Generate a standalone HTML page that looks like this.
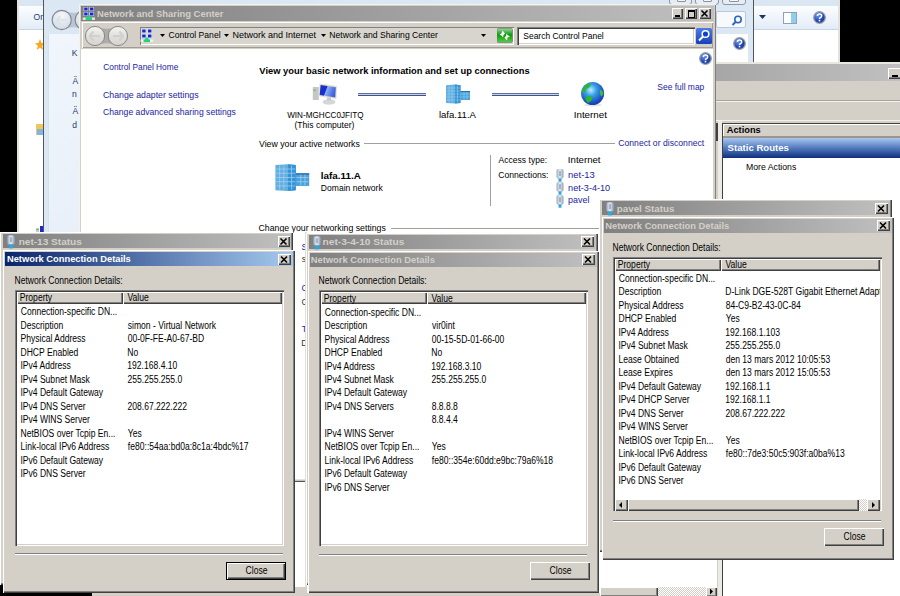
<!DOCTYPE html><html><head><meta charset="utf-8"><style>
html,body{margin:0;padding:0;}
body{width:900px;height:596px;position:relative;overflow:hidden;background:#000;font-family:"Liberation Sans",sans-serif;}
.r{position:absolute;}
.t{position:absolute;white-space:nowrap;transform-origin:0 50%;}
svg{display:block}
</style></head><body>
<div class="r" style="left:17px;top:0px;width:822px;height:593px;background:#fff;"></div>
<div class="r" style="left:17px;top:0px;width:2px;height:593px;background:#e4e1da;"></div>
<div class="r" style="left:838px;top:0px;width:2px;height:62px;background:#e4e1da;"></div>
<div class="r" style="left:19px;top:0px;width:819px;height:6px;background:#dbe6f3;"></div>
<div class="r" style="left:19px;top:6px;width:819px;height:23px;background:linear-gradient(#fcfdff,#e3ecf7);"></div>
<div class="r" style="left:19px;top:29px;width:819px;height:1px;background:#c6d4e6;"></div>
<div class="t" style="left:33px;top:12px;font-size:9.5px;line-height:9.5px;color:#1e3a78;transform:translate(0.615px,0.454px) scaleX(0.9000);">Or</div>
<svg class="r" style="left:35px;top:39px" width="10" height="12"><path d="M5 0 L6.5 4 L10 4.3 L7.2 6.8 L8.2 11 L5 8.6 L1.8 11 L2.8 6.8 L0 4.3 L3.5 4z" fill="#f6a91f"/></svg>
<svg class="r" style="left:36px;top:123px" width="8" height="13"><rect x="0" y="1" width="8" height="11" fill="#f0c75a"/><rect x="1" y="6" width="7" height="6" fill="#7fb7e0"/></svg>
<svg class="r" style="left:813px;top:11px" width="13" height="13"><defs><radialGradient id="hg813" cx="0.35" cy="0.3" r="0.8"><stop offset="0" stop-color="#6f9af0"/><stop offset="0.6" stop-color="#1f47b8"/><stop offset="1" stop-color="#183a98"/></radialGradient></defs><circle cx="6.5" cy="6.5" r="5.8" fill="url(#hg813)" stroke="#9c9fa6" stroke-width="1.3"/><path d="M4.4 4.9 Q4.4 2.9 6.5 2.9 Q8.7 2.9 8.7 4.8 Q8.7 6.1 7.3 6.7 Q6.5 7.1 6.5 8.0" stroke="#fff" stroke-width="1.5" fill="none"/><rect x="5.7" y="8.8" width="1.6" height="1.6" fill="#fff"/></svg>
<svg class="r" style="left:759px;top:15px" width="8" height="5"><path d="M0 0 L7 0 L3.5 4z" fill="#1c3460"/></svg>
<svg class="r" style="left:783px;top:12px" width="14" height="12"><rect x="0.5" y="0.5" width="13" height="11" fill="#fff" stroke="#8aa2bf"/><rect x="8" y="1" width="5" height="10" fill="#8fd0e8"/></svg>
<svg class="r" style="left:35px;top:224px" width="8" height="9"><rect x="1" y="4" width="3" height="5" fill="#c8c8c8"/><rect x="1.5" y="5" width="2" height="1" fill="#4c4"/><rect x="5" y="2" width="3" height="7" fill="#1a2ad0"/></svg>
<div class="r" style="left:43px;top:0px;width:711px;height:593px;background:#dce7f4;"></div>
<div class="r" style="left:43px;top:0px;width:1px;height:593px;background:#555;"></div>
<div class="r" style="left:753px;top:0px;width:1px;height:62px;background:#555;"></div>
<div class="r" style="left:49px;top:34px;width:699px;height:559px;background:linear-gradient(160deg,#f1f6fc 0%,#e3ecf7 40%,#d9e5f3 100%);"></div>
<div class="r" style="left:48px;top:34px;width:1px;height:559px;background:#d3e0ef;"></div>
<div class="r" style="left:717px;top:34px;width:31px;height:28px;background:#fff;"></div>
<svg class="r" style="left:50.8px;top:8.5px" width="28" height="23"><defs><radialGradient id="bb" cx="0.5" cy="0.3" r="0.7"><stop offset="0" stop-color="#f6f8fa"/><stop offset="1" stop-color="#d2dae3"/></radialGradient></defs><path d="M11 1.4 Q22.5 6 34 1.4 L34 20.6 Q22.5 16 11 20.6z" fill="#b9c6d4"/><circle cx="10.7" cy="11" r="9.6" fill="url(#bb)" stroke="#7d8692" stroke-width="1.1"/><circle cx="33.7" cy="11" r="9.6" fill="url(#bb)" stroke="#7d8692" stroke-width="1.1"/><path d="M5.5 11 L15.5 11 M5.5 11 L9.5 7 M5.5 11 L9.5 15" stroke="#dde3ea" stroke-width="2" fill="none"/></svg>
<div class="t" style="left:71px;top:47px;font-size:9.5px;line-height:9.5px;color:#1e3a6e;transform:translate(0.816px,0.953px) scaleX(0.9000);">K</div>
<div class="t" style="left:72px;top:75px;font-size:9.5px;line-height:9.5px;color:#1e3a6e;transform:translate(0.500px,0.954px) scaleX(0.9000);">Ä</div>
<div class="t" style="left:71px;top:88px;font-size:9.5px;line-height:9.5px;color:#1e3a6e;transform:translate(0.944px,0.954px) scaleX(0.9000);">n</div>
<div class="t" style="left:72px;top:105px;font-size:9.5px;line-height:9.5px;color:#1e3a6e;transform:translate(0.500px,0.954px) scaleX(0.9000);">Ä</div>
<div class="t" style="left:72px;top:119px;font-size:9.5px;line-height:9.5px;color:#1e3a6e;transform:translate(0.158px,0.954px) scaleX(0.9000);">d</div>
<div class="r" style="left:669px;top:-4px;width:23px;height:8.5px;background:#e6edf5;border:1px solid #8c98a6;box-sizing:border-box;border-radius:0 0 3px 3px;"></div>
<div class="r" style="left:695px;top:-4px;width:24px;height:8.5px;background:#e6edf5;border:1px solid #8c98a6;box-sizing:border-box;border-radius:0 0 3px 3px;"></div>
<div class="r" style="left:722px;top:-4px;width:24px;height:8.5px;background:#e6edf5;border:1px solid #8c98a6;box-sizing:border-box;border-radius:0 0 3px 3px;"></div>
<div class="r" style="left:677px;top:-2px;width:9px;height:3.5px;background:#f4f6f8;border:1px solid #8a929c;box-sizing:border-box;border-radius:1px;"></div>
<div class="r" style="left:703px;top:-2px;width:9px;height:3.5px;background:#f4f6f8;border:1px solid #8a929c;box-sizing:border-box;border-radius:1px;"></div>
<div class="r" style="left:729px;top:-2px;width:10px;height:3.5px;background:#f4f6f8;border:1px solid #8a929c;box-sizing:border-box;border-radius:1px;"></div>
<div class="r" style="left:716px;top:11px;width:30px;height:17px;background:#f7f9fc;border:1px solid #b9c8da;box-sizing:border-box;border-radius:2px;"></div>
<svg class="r" style="left:731px;top:15px" width="12" height="12"><circle cx="7" cy="4.5" r="3.2" fill="none" stroke="#2a66c8" stroke-width="1.6"/><path d="M4.8 6.8 L1.5 10" stroke="#2a66c8" stroke-width="2"/></svg>
<svg class="r" style="left:733px;top:37px" width="13" height="13"><defs><radialGradient id="hg733" cx="0.35" cy="0.3" r="0.8"><stop offset="0" stop-color="#6f9af0"/><stop offset="0.6" stop-color="#1f47b8"/><stop offset="1" stop-color="#183a98"/></radialGradient></defs><circle cx="6.5" cy="6.5" r="5.8" fill="url(#hg733)" stroke="#9c9fa6" stroke-width="1.3"/><path d="M4.4 4.9 Q4.4 2.9 6.5 2.9 Q8.7 2.9 8.7 4.8 Q8.7 6.1 7.3 6.7 Q6.5 7.1 6.5 8.0" stroke="#fff" stroke-width="1.5" fill="none"/><rect x="5.7" y="8.8" width="1.6" height="1.6" fill="#fff"/></svg>
<div class="r" style="left:716px;top:62px;width:184px;height:534px;background:#fff;"></div>
<div class="r" style="left:716px;top:62px;width:184px;height:2px;background:#e9e6df;"></div>
<div class="r" style="left:716px;top:64px;width:184px;height:17px;background:linear-gradient(90deg,#a6a6a6,#c0c0c0);"></div>
<div class="r" style="left:888px;top:68px;width:14px;height:11px;background:#d4d0c8;box-shadow:inset 1px 1px 0 #fff, inset -1px -1px 0 #404040, inset -2px -2px 0 #808080;"></div>
<div class="r" style="left:892px;top:75px;width:6px;height:2px;background:#000"></div>
<div class="r" style="left:716px;top:81px;width:184px;height:40px;background:#d4d0c8;"></div>
<div class="r" style="left:716px;top:100px;width:184px;height:1px;background:#a9a59d;"></div>
<div class="r" style="left:716px;top:101px;width:184px;height:1px;background:#f4f2ee;"></div>
<div class="r" style="left:716px;top:120px;width:184px;height:3px;background:#d4d0c8;"></div>
<div class="r" style="left:716px;top:120px;width:184px;height:1px;background:#f2f0ec;"></div>
<div class="r" style="left:716px;top:123px;width:6px;height:473px;background:#d4d0c8;"></div>
<div class="r" style="left:718px;top:121px;width:4px;height:475px;background:#eceae4;"></div>
<div class="r" style="left:716px;top:123px;width:2px;height:18px;background:#404040;"></div>
<div class="r" style="left:722px;top:123px;width:178px;height:1px;background:#404040;"></div>
<div class="r" style="left:722px;top:124px;width:1px;height:472px;background:#404040;"></div>
<div class="r" style="left:723px;top:124px;width:177px;height:13px;background:#d4d0c8;box-shadow:inset 1px 1px 0 #fff;"></div>
<div class="r" style="left:723px;top:136px;width:177px;height:1.5px;background:#9a968e;"></div>
<div class="t" style="left:726px;top:125px;font-size:9.3px;line-height:9.3px;color:#000;font-weight:bold;transform:translate(0.769px,0.723px) scaleX(0.9946);">Actions</div>
<div class="r" style="left:723px;top:137.5px;width:177px;height:20.5px;background:linear-gradient(#a9c7ee,#5b82c4 45%,#0f2f7e);"></div>
<div class="t" style="left:727px;top:143px;font-size:9.3px;line-height:9.3px;color:#fff;font-weight:bold;transform:translate(0.612px,0.823px) scaleX(1.0310);">Static Routes</div>
<div class="t" style="left:746px;top:162px;font-size:9.3px;line-height:9.3px;color:#000;transform:translate(0.004px,0.523px) scaleX(0.9358);">More Actions</div>
<div class="r" style="left:79px;top:4px;width:637px;height:592px;background:#d4d0c8;box-shadow:inset 1px 1px 0 #f4f2ee, inset -1px 0 0 #808080;"></div>
<div class="r" style="left:81px;top:6px;width:633px;height:15px;background:linear-gradient(90deg,#808080,#c0c0c0);"></div>
<svg class="r" style="left:82px;top:6px" width="14" height="15"><rect x="1.6" y="1" width="4.4" height="4" fill="#e4eaf2"/><rect x="2.2" y="1.5" width="3.4" height="3" fill="#1426d8"/><rect x="7.4" y="1" width="4.4" height="4" fill="#e4eaf2"/><rect x="8" y="1.5" width="3.4" height="3" fill="#1426d8"/><rect x="1.6" y="6" width="4.4" height="4" fill="#e4eaf2"/><rect x="2.2" y="6.5" width="3.4" height="3" fill="#1426d8"/><rect x="7.4" y="6" width="4.4" height="4" fill="#e4eaf2"/><rect x="8" y="6.5" width="3.4" height="3" fill="#1426d8"/><rect x="0.6" y="11.5" width="12.4" height="2.4" fill="#e6e6ec"/><path d="M5.8 9.6 L7.8 9.6 L8.6 11.4 L10 11.4 L10 14 L3.6 14 L3.6 11.4 L5 11.4z" fill="#22d27a"/></svg>
<div class="t" style="left:96px;top:8px;font-size:9.5px;line-height:9.5px;color:#d4d0c8;font-weight:bold;transform:translate(0.888px,0.754px) scaleX(0.9904);">Network and Sharing Center</div>
<div class="r" style="left:672px;top:8px;width:11px;height:11px;background:#d4d0c8;box-shadow:inset 1px 1px 0 #fff, inset -1px -1px 0 #404040, inset -2px -2px 0 #808080;"></div>
<div class="r" style="left:685px;top:8px;width:12px;height:11px;background:#d4d0c8;box-shadow:inset 1px 1px 0 #fff, inset -1px -1px 0 #404040, inset -2px -2px 0 #808080;"></div>
<div class="r" style="left:699px;top:8px;width:12px;height:11px;background:#d4d0c8;box-shadow:inset 1px 1px 0 #fff, inset -1px -1px 0 #404040, inset -2px -2px 0 #808080;"></div>
<div class="r" style="left:675px;top:15px;width:5px;height:2px;background:#000"></div>
<div class="r" style="left:688px;top:10px;width:5px;height:5px;border:1px solid #000;border-top-width:2px"></div>
<div class="r" style="left:699px;top:8px;width:12px;height:11px;background:#d4d0c8;box-shadow:inset 1px 1px 0 #fff, inset -1px -1px 0 #404040, inset -2px -2px 0 #808080;"></div>
<svg class="r" style="left:699px;top:8px" width="12" height="11"><path d="M2.5 2.5 L8.5 8.5 M8.5 2.5 L2.5 8.5" stroke="#000" stroke-width="1.6"/></svg>
<div class="r" style="left:81px;top:21px;width:633px;height:28px;background:#d4d0c8;"></div>
<div class="r" style="left:82px;top:22px;width:631px;height:26px;box-shadow:inset 1px 1px 0 #fff, inset -1px -1px 0 #a09c94;"></div>
<svg class="r" style="left:84px;top:25px" width="46" height="23"><defs><linearGradient id="nb" x1="0" y1="0" x2="0" y2="1"><stop offset="0" stop-color="#f4f4f2"/><stop offset="0.5" stop-color="#e2e0dc"/><stop offset="1" stop-color="#d6d4cf"/></linearGradient></defs><path d="M11 1.6 Q22.5 6 34 1.6 L34 20.4 Q22.5 16 11 20.4z" fill="#aeaca6"/><circle cx="11" cy="11" r="9.6" fill="url(#nb)" stroke="#86888c" stroke-width="1"/><circle cx="33.9" cy="11" r="9.6" fill="url(#nb)" stroke="#86888c" stroke-width="1"/><path d="M5.5 11 L16 11 M5.5 11 L9.5 6.5 M5.5 11 L9.5 15.5" stroke="#d0d0ce" stroke-width="2" fill="none"/><path d="M39.4 11 L29 11 M39.4 11 L35.4 6.5 M39.4 11 L35.4 15.5" stroke="#d0d0ce" stroke-width="2" fill="none"/></svg>
<div class="r" style="left:140px;top:27px;width:374px;height:18px;background:#d8d5ce;box-shadow:inset 1px 1px 0 #808080, inset -1px -1px 0 #fff;"></div>
<svg class="r" style="left:140px;top:28px" width="14" height="15"><rect x="1.6" y="1" width="4.4" height="4" fill="#e4eaf2"/><rect x="2.2" y="1.5" width="3.4" height="3" fill="#1426d8"/><rect x="7.4" y="1" width="4.4" height="4" fill="#e4eaf2"/><rect x="8" y="1.5" width="3.4" height="3" fill="#1426d8"/><rect x="1.6" y="6" width="4.4" height="4" fill="#e4eaf2"/><rect x="2.2" y="6.5" width="3.4" height="3" fill="#1426d8"/><rect x="7.4" y="6" width="4.4" height="4" fill="#e4eaf2"/><rect x="8" y="6.5" width="3.4" height="3" fill="#1426d8"/><rect x="0.6" y="11.5" width="12.4" height="2.4" fill="#f2f2f6"/><path d="M5.8 9.6 L7.8 9.6 L8.6 11.4 L10 11.4 L10 14 L3.6 14 L3.6 11.4 L5 11.4z" fill="#22d27a"/></svg>
<svg class="r" style="left:160px;top:34px" width="6" height="4"><path d="M0 0 L5 0 L2.5 3z" fill="#000"/></svg>
<svg class="r" style="left:224px;top:34px" width="6" height="4"><path d="M0 0 L5 0 L2.5 3z" fill="#000"/></svg>
<svg class="r" style="left:321px;top:34px" width="6" height="4"><path d="M0 0 L5 0 L2.5 3z" fill="#000"/></svg>
<svg class="r" style="left:481px;top:34px" width="6" height="4"><path d="M0 0 L5 0 L2.5 3z" fill="#000"/></svg>
<div class="t" style="left:168px;top:31px;font-size:9.3px;line-height:9.3px;color:#000;transform:translate(0.470px,0.223px) scaleX(0.9250);">Control Panel</div>
<div class="t" style="left:232px;top:31px;font-size:9.3px;line-height:9.3px;color:#000;transform:translate(0.580px,0.223px) scaleX(0.9671);">Network and Internet</div>
<div class="t" style="left:329px;top:31px;font-size:9.3px;line-height:9.3px;color:#000;transform:translate(0.311px,0.223px) scaleX(0.9255);">Network and Sharing Center</div>
<svg class="r" style="left:497px;top:28px" width="16" height="15"><defs><linearGradient id="grb" x1="0" y1="0" x2="0" y2="1"><stop offset="0" stop-color="#9ad89a"/><stop offset="0.45" stop-color="#0c9a0c"/><stop offset="1" stop-color="#5ccc4c"/></linearGradient></defs><rect x="0" y="0.5" width="15.5" height="14" rx="1.5" fill="url(#grb)" stroke="#6a7a6a" stroke-width="0.6"/><path d="M5.5 2.5 L4.5 5.5 L2.5 6.5 L5 8 L6 9.5 L6.5 7 L8 5.5z" fill="#fff"/><path d="M10 12.5 L10.5 9.5 L13 8.5 L10.5 7 L9.5 5.5 L9 8 L7.5 9.5z" fill="#fff"/></svg>
<div class="r" style="left:517px;top:27px;width:178px;height:18px;background:#fff;box-shadow:inset 1px 1px 0 #808080, inset 2px 2px 0 #404040, inset -1px -1px 0 #fff, inset -2px -2px 0 #d4d0c8;"></div>
<div class="t" style="left:523px;top:31px;font-size:9.3px;line-height:9.3px;color:#000;transform:translate(0.319px,0.623px) scaleX(0.9099);">Search Control Panel</div>
<svg class="r" style="left:696px;top:28px" width="16" height="16"><defs><linearGradient id="sg" x1="0" y1="0" x2="0" y2="1"><stop offset="0" stop-color="#4d7ee8"/><stop offset="1" stop-color="#1540b8"/></linearGradient></defs><rect x="0" y="0" width="16" height="16" rx="1.5" fill="url(#sg)"/><circle cx="9.5" cy="6" r="3.3" fill="#1340c8" stroke="#fff" stroke-width="1.5"/><path d="M7 8.5 L3 12.5" stroke="#fff" stroke-width="2"/></svg>
<div class="r" style="left:81px;top:49px;width:632px;height:547px;background:#fff;"></div>
<svg class="r" style="left:699px;top:52px" width="13" height="13"><defs><radialGradient id="hg699" cx="0.35" cy="0.3" r="0.8"><stop offset="0" stop-color="#6f9af0"/><stop offset="0.6" stop-color="#1f47b8"/><stop offset="1" stop-color="#183a98"/></radialGradient></defs><circle cx="6.5" cy="6.5" r="5.8" fill="url(#hg699)" stroke="#9c9fa6" stroke-width="1.3"/><path d="M4.4 4.9 Q4.4 2.9 6.5 2.9 Q8.7 2.9 8.7 4.8 Q8.7 6.1 7.3 6.7 Q6.5 7.1 6.5 8.0" stroke="#fff" stroke-width="1.5" fill="none"/><rect x="5.7" y="8.8" width="1.6" height="1.6" fill="#fff"/></svg>
<div class="t" style="left:103px;top:63px;font-size:9.3px;line-height:9.3px;color:#2323a0;transform:translate(0.283px,0.023px) scaleX(0.8962);">Control Panel Home</div>
<div class="t" style="left:102px;top:91px;font-size:9.3px;line-height:9.3px;color:#2323a0;transform:translate(0.961px,0.123px) scaleX(0.9440);">Change adapter settings</div>
<div class="t" style="left:102px;top:107px;font-size:9.3px;line-height:9.3px;color:#2323a0;transform:translate(0.968px,0.723px) scaleX(0.9282);">Change advanced sharing settings</div>
<div class="t" style="left:259px;top:67px;font-size:9.2px;line-height:9.2px;color:#000;font-weight:bold;transform:translate(0.353px,0.208px) scaleX(1.0187);">View your basic network information and set up connections</div>
<svg class="r" style="left:311px;top:82px" width="28" height="25"><defs><linearGradient id="scr" x1="0" y1="0" x2="1" y2="0.3"><stop offset="0" stop-color="#1c2fd0"/><stop offset="0.45" stop-color="#1530c8"/><stop offset="0.5" stop-color="#8fb0f5"/><stop offset="1" stop-color="#3d62e0"/></linearGradient></defs><rect x="1.8" y="5" width="6" height="13" fill="#c4c6c8"/><rect x="2.5" y="7.5" width="2" height="1.5" fill="#5ac85a"/><path d="M8.5 1.5 L26 4 L25.5 17 L7.5 14.2z" fill="#e6e2cc"/><path d="M9.6 2.9 L24.8 5.2 L24.3 15.6 L8.7 13.1z" fill="url(#scr)"/><ellipse cx="18" cy="20" rx="6.5" ry="2.8" fill="#d4d6d8"/><rect x="16" y="15.5" width="4" height="3" fill="#c8cacc"/></svg>
<div class="r" style="left:358px;top:93px;width:68px;height:1px;background:#5d6f9c;"></div>
<div class="r" style="left:358px;top:94px;width:68px;height:1px;background:#c8d0e3;"></div>
<div class="r" style="left:358px;top:95px;width:68px;height:1px;background:#3f5290;"></div>
<div class="r" style="left:492px;top:93px;width:67px;height:1px;background:#5d6f9c;"></div>
<div class="r" style="left:492px;top:94px;width:67px;height:1px;background:#c8d0e3;"></div>
<div class="r" style="left:492px;top:95px;width:67px;height:1px;background:#3f5290;"></div>
<svg class="r" style="left:445px;top:83px" width="27" height="22" viewBox="0 0 27 22"><path d="M1 2.2 L10 1.6 L15.5 2.2 L15.5 20 L10 20.6 L1 20z" fill="#62aee0"/><path d="M10 1.6 L15.5 2.2 L15.5 20 L10 20.6z" fill="#3393d6"/><path d="M1.5 5 L15 5 M1.5 8 L15 8 M1.5 11 L15 11 M1.5 14 L15 14 M1.5 17 L15 17 M4 2.5 L4 19.5 M7 2.5 L7 19.5 M12.5 2.5 L12.5 19.5" stroke="#a6d4f2" stroke-width="0.5"/><path d="M15.5 8 L25 8 L25 17 L15.5 17z" fill="#4aa2dc"/><path d="M15.5 8 L25 8 L25 9 L15.5 9z" fill="#2f6fa8"/><path d="M16 11 L24.5 11 M16 14 L24.5 14 M19 9 L19 16.5 M22 9 L22 16.5" stroke="#a6d4f2" stroke-width="0.5"/></svg>
<svg class="r" style="left:579px;top:80px" width="27" height="27"><defs><radialGradient id="gl" cx="0.42" cy="0.35" r="0.7"><stop offset="0" stop-color="#b8f0ff"/><stop offset="0.35" stop-color="#3aa0e8"/><stop offset="0.8" stop-color="#1a4cc0"/><stop offset="1" stop-color="#1a3aa0"/></radialGradient></defs><ellipse cx="14" cy="25" rx="9" ry="1.5" fill="#e4e4e4"/><circle cx="13.6" cy="13.5" r="11.5" fill="url(#gl)"/><path d="M3.5 10 Q6 4 11 3 Q13 6 9 8 Q6 9 6.5 12 Q4 13 3.2 12z" fill="#2fb52f"/><path d="M6.5 17 Q10 15 13.5 17.5 Q12.5 22 8.5 23 Q6.5 20 6.5 17z" fill="#2fb52f"/><path d="M21 9.5 Q23.5 10 24.5 13 Q24 17 21.5 15.5 Q20.5 12 21 9.5z" fill="#3dbf3d"/></svg>
<div class="t" style="left:657px;top:82px;font-size:9.3px;line-height:9.3px;color:#2323a0;transform:translate(0.319px,0.923px) scaleX(0.9093);">See full map</div>
<div class="t" style="left:287px;top:111px;font-size:9.0px;line-height:9.0px;color:#000;transform:translate(0.159px,0.277px) scaleX(0.9034);">WIN-MGHCC0JFITQ</div>
<div class="t" style="left:294px;top:120px;font-size:9.0px;line-height:9.0px;color:#000;transform:translate(0.486px,0.677px) scaleX(0.9512);">(This computer)</div>
<div class="t" style="left:438px;top:110px;font-size:9.3px;line-height:9.3px;color:#000;transform:translate(0.876px,0.923px) scaleX(1.0315);">lafa.11.A</div>
<div class="t" style="left:573px;top:110px;font-size:9.3px;line-height:9.3px;color:#000;transform:translate(0.718px,0.923px) scaleX(1.0541);">Internet</div>
<div class="t" style="left:258px;top:140px;font-size:9.3px;line-height:9.3px;color:#000;transform:translate(0.956px,0.023px) scaleX(0.9397);">View your active networks</div>
<div class="r" style="left:364px;top:143px;width:251px;height:1px;background:#a0a0a0;"></div>
<div class="t" style="left:618px;top:139px;font-size:9.3px;line-height:9.3px;color:#2323a0;transform:translate(0.268px,0.423px) scaleX(0.9291);">Connect or disconnect</div>
<svg class="r" style="left:274px;top:162px" width="38" height="31" viewBox="0 0 27 22"><path d="M1 2.2 L10 1.6 L15.5 2.2 L15.5 20 L10 20.6 L1 20z" fill="#62aee0"/><path d="M10 1.6 L15.5 2.2 L15.5 20 L10 20.6z" fill="#3393d6"/><path d="M1.5 5 L15 5 M1.5 8 L15 8 M1.5 11 L15 11 M1.5 14 L15 14 M1.5 17 L15 17 M4 2.5 L4 19.5 M7 2.5 L7 19.5 M12.5 2.5 L12.5 19.5" stroke="#a6d4f2" stroke-width="0.5"/><path d="M15.5 8 L25 8 L25 17 L15.5 17z" fill="#4aa2dc"/><path d="M15.5 8 L25 8 L25 9 L15.5 9z" fill="#2f6fa8"/><path d="M16 11 L24.5 11 M16 14 L24.5 14 M19 9 L19 16.5 M22 9 L22 16.5" stroke="#a6d4f2" stroke-width="0.5"/></svg>
<div class="t" style="left:320px;top:171px;font-size:9.6px;line-height:9.6px;color:#000;font-weight:bold;transform:translate(0.809px,0.069px) scaleX(1.0285);">lafa.11.A</div>
<div class="t" style="left:320px;top:183px;font-size:9.3px;line-height:9.3px;color:#000;transform:translate(0.815px,0.823px) scaleX(0.9210);">Domain network</div>
<div class="r" style="left:490px;top:155px;width:1px;height:51px;background:#a0a0a0;"></div>
<div class="t" style="left:498px;top:156px;font-size:9.3px;line-height:9.3px;color:#000;transform:translate(0.600px,0.323px) scaleX(0.9192);">Access type:</div>
<div class="t" style="left:567px;top:156px;font-size:9.3px;line-height:9.3px;color:#000;transform:translate(0.831px,0.323px) scaleX(1.0377);">Internet</div>
<div class="t" style="left:498px;top:171px;font-size:9.3px;line-height:9.3px;color:#000;transform:translate(0.169px,0.023px) scaleX(0.9262);">Connections:</div>
<svg class="r" style="left:556px;top:169px" width="8" height="13"><defs><linearGradient id="cg1" x1="0" y1="0" x2="1" y2="0"><stop offset="0" stop-color="#9fb0c4"/><stop offset="0.5" stop-color="#eef3f8"/><stop offset="1" stop-color="#8e9fb4"/></linearGradient></defs><rect x="0.7000000000000002" y="0.2" width="6.6" height="9.2" rx="1.6" fill="url(#cg1)" stroke="#a9b6c6" stroke-width="0.5"/><rect x="3.4" y="2.2" width="1.2" height="5" fill="#7f90a6"/><rect x="2.5" y="9.399999999999999" width="3" height="3.3" fill="#2ea6e2"/></svg>
<svg class="r" style="left:556px;top:182px" width="8" height="13"><defs><linearGradient id="cg2" x1="0" y1="0" x2="1" y2="0"><stop offset="0" stop-color="#9fb0c4"/><stop offset="0.5" stop-color="#eef3f8"/><stop offset="1" stop-color="#8e9fb4"/></linearGradient></defs><rect x="0.7000000000000002" y="0.2" width="6.6" height="9.2" rx="1.6" fill="url(#cg2)" stroke="#a9b6c6" stroke-width="0.5"/><rect x="3.4" y="2.2" width="1.2" height="5" fill="#7f90a6"/><rect x="2.5" y="9.399999999999999" width="3" height="3.3" fill="#2ea6e2"/></svg>
<svg class="r" style="left:556px;top:195px" width="8" height="13"><defs><linearGradient id="cg3" x1="0" y1="0" x2="1" y2="0"><stop offset="0" stop-color="#9fb0c4"/><stop offset="0.5" stop-color="#eef3f8"/><stop offset="1" stop-color="#8e9fb4"/></linearGradient></defs><rect x="0.7000000000000002" y="0.2" width="6.6" height="9.2" rx="1.6" fill="url(#cg3)" stroke="#a9b6c6" stroke-width="0.5"/><rect x="3.4" y="2.2" width="1.2" height="5" fill="#7f90a6"/><rect x="2.5" y="9.399999999999999" width="3" height="3.3" fill="#2ea6e2"/></svg>
<div class="t" style="left:568px;top:171px;font-size:9.3px;line-height:9.3px;color:#2323a0;transform:translate(0.088px,0.023px) scaleX(1.0122);">net-13</div>
<div class="t" style="left:568px;top:183px;font-size:9.3px;line-height:9.3px;color:#2323a0;transform:translate(0.107px,0.723px) scaleX(0.9812);">net-3-4-10</div>
<div class="t" style="left:568px;top:195px;font-size:9.3px;line-height:9.3px;color:#2323a0;transform:translate(0.119px,0.923px) scaleX(0.9611);">pavel</div>
<div class="t" style="left:258px;top:224px;font-size:9.3px;line-height:9.3px;color:#000;transform:translate(0.563px,0.223px) scaleX(0.9401);">Change your networking settings</div>
<div class="r" style="left:391px;top:228px;width:214px;height:1px;background:#a0a0a0;"></div>
<div class="t" style="left:301px;top:243px;font-size:9.3px;line-height:9.3px;color:#2323a0;transform:translate(0.611px,0.023px) scaleX(0.9300);">S</div>
<div class="t" style="left:301px;top:255px;font-size:9.3px;line-height:9.3px;color:#333;transform:translate(0.784px,0.023px) scaleX(0.9300);">s</div>
<div class="t" style="left:301px;top:284px;font-size:9.3px;line-height:9.3px;color:#2323a0;transform:translate(0.568px,0.023px) scaleX(0.9300);">C</div>
<div class="t" style="left:301px;top:298px;font-size:9.3px;line-height:9.3px;color:#333;transform:translate(0.568px,0.023px) scaleX(0.9300);">C</div>
<div class="t" style="left:301px;top:325px;font-size:9.3px;line-height:9.3px;color:#2323a0;transform:translate(0.827px,0.023px) scaleX(0.9300);">T</div>
<div class="t" style="left:301px;top:339px;font-size:9.3px;line-height:9.3px;color:#333;transform:translate(0.308px,0.023px) scaleX(0.9300);">D</div>
<div class="r" style="left:600px;top:560px;width:117px;height:27px;background:#fff;"></div>
<div class="r" style="left:600px;top:587px;width:117px;height:9px;background:#d4d0c8;"></div>
<div class="r" style="left:600px;top:587px;width:58px;height:10px;background:#d4d0c8;box-shadow:inset 1px 1px 0 #fff, inset -1px -1px 0 #404040, inset -2px -2px 0 #808080;"></div>
<div class="r" style="left:658px;top:587px;width:48px;height:9px;background:repeating-conic-gradient(#fff 0 25%, #d4d0c8 0 50%) 0 0/2px 2px;"></div>
<div class="r" style="left:706px;top:587px;width:11px;height:10px;background:#d4d0c8;box-shadow:inset 1px 1px 0 #fff, inset -1px -1px 0 #404040, inset -2px -2px 0 #808080;"></div>
<svg class="r" style="left:706px;top:587px" width="11" height="9"><path d="M4 1.5 L7 4.5 L4 7.5z" fill="#000"/></svg>
<div class="r" style="left:92px;top:593px;width:508px;height:3px;background:#d4d0c8;"></div>
<div class="r" style="left:295px;top:587px;width:12px;height:6px;background:#d4d0c8;"></div>
<div class="r" style="left:295px;top:479px;width:10px;height:2px;background:linear-gradient(#f4f2ee,#b8b4ac);"></div>
<div class="r" style="left:295px;top:481px;width:10px;height:1px;background:#555;"></div>
<div class="r" style="left:305px;top:232px;width:2px;height:355px;background:#e0ddd7;"></div>
<div class="r" style="left:0px;top:593px;width:92px;height:3px;background:#000;"></div>
<div class="r" style="left:0px;top:232px;width:293px;height:353px;background:#d4d0c8;box-shadow:inset 1px 1px 0 #fff, inset -1px -1px 0 #404040, inset -2px -2px 0 #808080;"></div>
<div class="r" style="left:3px;top:234px;width:288px;height:14px;background:linear-gradient(90deg,#808080,#c0c0c0);"></div>
<svg class="r" style="left:7px;top:235px" width="8" height="14"><defs><linearGradient id="cg4" x1="0" y1="0" x2="1" y2="0"><stop offset="0" stop-color="#9fb0c4"/><stop offset="0.5" stop-color="#eef3f8"/><stop offset="1" stop-color="#8e9fb4"/></linearGradient></defs><rect x="0.7000000000000002" y="0.2" width="6.6" height="9.2" rx="1.6" fill="url(#cg4)" stroke="#a9b6c6" stroke-width="0.5"/><rect x="3.4" y="2.2" width="1.2" height="5" fill="#7f90a6"/><rect x="1.9" y="9.399999999999999" width="4.2" height="4" fill="#2ea6e2"/></svg>
<div class="t" style="left:18px;top:236px;font-size:9.45px;line-height:9.45px;color:#d4d0c8;font-weight:bold;transform:translate(0.645px,0.896px) scaleX(1.0659);">net-13 Status</div>
<div class="r" style="left:278px;top:236px;width:12px;height:11px;background:#d4d0c8;box-shadow:inset 1px 1px 0 #fff, inset -1px -1px 0 #404040, inset -2px -2px 0 #808080;"></div>
<svg class="r" style="left:278px;top:236px" width="12" height="11"><path d="M2.5 2.5 L8.5 8.5 M8.5 2.5 L2.5 8.5" stroke="#000" stroke-width="1.6"/></svg>
<div class="r" style="left:3px;top:250px;width:292px;height:343px;background:#d4d0c8;box-shadow:inset 1px 1px 0 #fff, inset -1px -1px 0 #404040, inset -2px -2px 0 #808080;"></div>
<div class="r" style="left:5px;top:252px;width:288px;height:14px;background:linear-gradient(90deg,#0a246a,#a6caf0);"></div>
<div class="t" style="left:6px;top:254px;font-size:9.45px;line-height:9.45px;color:#fff;font-weight:bold;transform:translate(0.893px,0.496px) scaleX(0.9887);">Network Connection Details</div>
<div class="r" style="left:278px;top:254px;width:13px;height:11px;background:#d4d0c8;box-shadow:inset 1px 1px 0 #fff, inset -1px -1px 0 #404040, inset -2px -2px 0 #808080;"></div>
<svg class="r" style="left:278px;top:254px" width="13" height="11"><path d="M3.0 2.5 L9.0 8.5 M9.0 2.5 L3.0 8.5" stroke="#000" stroke-width="1.6"/></svg>
<div class="t" style="left:14px;top:276px;font-size:10px;line-height:10px;color:#000;transform:translate(0.514px,0.230px) scaleX(0.8578);">Network Connection Details:</div>
<div class="r" style="left:15px;top:290px;width:269px;height:256px;background:#fff;box-shadow:inset 1px 1px 0 #808080, inset 2px 2px 0 #404040, inset -1px -1px 0 #fff, inset -2px -2px 0 #d4d0c8;"></div>
<div class="r" style="left:17px;top:292px;width:106px;height:12px;background:#d4d0c8;box-shadow:inset 1px 1px 0 #fff, inset -1px -1px 0 #404040, inset -2px -2px 0 #808080;"></div>
<div class="r" style="left:123px;top:292px;width:159px;height:12px;background:#d4d0c8;box-shadow:inset 1px 1px 0 #fff, inset -1px -1px 0 #404040, inset -2px -2px 0 #808080;"></div>
<div class="t" style="left:19px;top:293px;font-size:10px;line-height:10px;color:#000;transform:translate(0.816px,0.330px) scaleX(0.8550);">Property</div>
<div class="t" style="left:127px;top:293px;font-size:10px;line-height:10px;color:#000;transform:translate(0.457px,0.330px) scaleX(0.8550);">Value</div>
<div class="r" style="left:17px;top:304px;width:265px;height:240px;overflow:hidden">
<div class="t" style="left:3px;top:3px;font-size:10px;line-height:10px;color:#000;transform:translate(0.772px,0.330px) scaleX(0.8550);">Connection-specific DN...</div>
<div class="t" style="left:3px;top:16px;font-size:10px;line-height:10px;color:#000;transform:translate(0.516px,0.800px) scaleX(0.8550);">Description</div>
<div class="t" style="left:110px;top:16px;font-size:10px;line-height:10px;color:#000;transform:translate(0.786px,0.800px) scaleX(0.8550);">simon - Virtual Network</div>
<div class="t" style="left:3px;top:30px;font-size:10px;line-height:10px;color:#000;transform:translate(0.516px,0.270px) scaleX(0.8550);">Physical Address</div>
<div class="t" style="left:110px;top:30px;font-size:10px;line-height:10px;color:#000;transform:translate(0.658px,0.270px) scaleX(0.8550);">00-0F-FE-A0-67-BD</div>
<div class="t" style="left:3px;top:43px;font-size:10px;line-height:10px;color:#000;transform:translate(0.516px,0.740px) scaleX(0.8550);">DHCP Enabled</div>
<div class="t" style="left:110px;top:43px;font-size:10px;line-height:10px;color:#000;transform:translate(0.316px,0.740px) scaleX(0.8550);">No</div>
<div class="t" style="left:3px;top:57px;font-size:10px;line-height:10px;color:#000;transform:translate(0.431px,0.210px) scaleX(0.8550);">IPv4 Address</div>
<div class="t" style="left:110px;top:57px;font-size:10px;line-height:10px;color:#000;transform:translate(0.359px,0.210px) scaleX(0.8550);">192.168.4.10</div>
<div class="t" style="left:3px;top:70px;font-size:10px;line-height:10px;color:#000;transform:translate(0.431px,0.680px) scaleX(0.8550);">IPv4 Subnet Mask</div>
<div class="t" style="left:110px;top:70px;font-size:10px;line-height:10px;color:#000;transform:translate(0.573px,0.680px) scaleX(0.8550);">255.255.255.0</div>
<div class="t" style="left:3px;top:84px;font-size:10px;line-height:10px;color:#000;transform:translate(0.431px,0.150px) scaleX(0.8550);">IPv4 Default Gateway</div>
<div class="t" style="left:3px;top:97px;font-size:10px;line-height:10px;color:#000;transform:translate(0.431px,0.620px) scaleX(0.8550);">IPv4 DNS Server</div>
<div class="t" style="left:110px;top:97px;font-size:10px;line-height:10px;color:#000;transform:translate(0.573px,0.620px) scaleX(0.8550);">208.67.222.222</div>
<div class="t" style="left:3px;top:111px;font-size:10px;line-height:10px;color:#000;transform:translate(0.431px,0.090px) scaleX(0.8550);">IPv4 WINS Server</div>
<div class="t" style="left:3px;top:124px;font-size:10px;line-height:10px;color:#000;transform:translate(0.516px,0.560px) scaleX(0.8550);">NetBIOS over Tcpip En...</div>
<div class="t" style="left:110px;top:124px;font-size:10px;line-height:10px;color:#000;transform:translate(0.829px,0.560px) scaleX(0.8550);">Yes</div>
<div class="t" style="left:3px;top:138px;font-size:10px;line-height:10px;color:#000;transform:translate(0.516px,0.030px) scaleX(0.8550);">Link-local IPv6 Address</div>
<div class="t" style="left:110px;top:138px;font-size:10px;line-height:10px;color:#000;transform:translate(0.872px,0.030px) scaleX(0.8550);">fe80::54aa:bd0a:8c1a:4bdc%17</div>
<div class="t" style="left:3px;top:151px;font-size:10px;line-height:10px;color:#000;transform:translate(0.431px,0.500px) scaleX(0.8550);">IPv6 Default Gateway</div>
<div class="t" style="left:3px;top:164px;font-size:10px;line-height:10px;color:#000;transform:translate(0.431px,0.970px) scaleX(0.8550);">IPv6 DNS Server</div>
</div>
<div class="r" style="left:15px;top:553px;width:268px;height:1px;background:#808080;"></div>
<div class="r" style="left:15px;top:554px;width:268px;height:1px;background:#fff;"></div>
<div class="r" style="left:226px;top:562px;width:60px;height:18px;background:#000;"></div>
<div class="r" style="left:227px;top:563px;width:58px;height:16px;background:#d4d0c8;box-shadow:inset 1px 1px 0 #fff, inset -1px -1px 0 #404040, inset -2px -2px 0 #808080;"></div>
<div class="t" style="left:245px;top:566px;font-size:10px;line-height:10px;color:#000;transform:translate(0.572px,0.030px) scaleX(0.8550);">Close</div>
<div class="r" style="left:306px;top:233px;width:292px;height:352px;background:#d4d0c8;box-shadow:inset 1px 1px 0 #fff, inset -1px -1px 0 #404040, inset -2px -2px 0 #808080;"></div>
<div class="r" style="left:309px;top:235px;width:287px;height:14px;background:linear-gradient(90deg,#808080,#c0c0c0);"></div>
<svg class="r" style="left:313px;top:236px" width="8" height="14"><defs><linearGradient id="cg5" x1="0" y1="0" x2="1" y2="0"><stop offset="0" stop-color="#9fb0c4"/><stop offset="0.5" stop-color="#eef3f8"/><stop offset="1" stop-color="#8e9fb4"/></linearGradient></defs><rect x="0.7000000000000002" y="0.2" width="6.6" height="9.2" rx="1.6" fill="url(#cg5)" stroke="#a9b6c6" stroke-width="0.5"/><rect x="3.4" y="2.2" width="1.2" height="5" fill="#7f90a6"/><rect x="1.9" y="9.399999999999999" width="4.2" height="4" fill="#2ea6e2"/></svg>
<div class="t" style="left:322px;top:236px;font-size:9.45px;line-height:9.45px;color:#d4d0c8;font-weight:bold;transform:translate(0.539px,0.596px) scaleX(1.0755);">net-3-4-10 Status</div>
<div class="r" style="left:581px;top:236px;width:13px;height:11px;background:#d4d0c8;box-shadow:inset 1px 1px 0 #fff, inset -1px -1px 0 #404040, inset -2px -2px 0 #808080;"></div>
<svg class="r" style="left:581px;top:236px" width="13" height="11"><path d="M3.0 2.5 L9.0 8.5 M9.0 2.5 L3.0 8.5" stroke="#000" stroke-width="1.6"/></svg>
<div class="r" style="left:308px;top:251px;width:291px;height:342px;background:#d4d0c8;box-shadow:inset 1px 1px 0 #fff, inset -1px -1px 0 #404040, inset -2px -2px 0 #808080;"></div>
<div class="r" style="left:310px;top:253px;width:287px;height:14px;background:linear-gradient(90deg,#808080,#c0c0c0);"></div>
<div class="t" style="left:310px;top:254px;font-size:9.45px;line-height:9.45px;color:#d4d0c8;font-weight:bold;transform:translate(0.691px,0.696px) scaleX(0.9911);">Network Connection Details</div>
<div class="r" style="left:582px;top:254px;width:13px;height:11px;background:#d4d0c8;box-shadow:inset 1px 1px 0 #fff, inset -1px -1px 0 #404040, inset -2px -2px 0 #808080;"></div>
<svg class="r" style="left:582px;top:254px" width="13" height="11"><path d="M3.0 2.5 L9.0 8.5 M9.0 2.5 L3.0 8.5" stroke="#000" stroke-width="1.6"/></svg>
<div class="t" style="left:318px;top:276px;font-size:10px;line-height:10px;color:#000;transform:translate(0.514px,0.030px) scaleX(0.8578);">Network Connection Details:</div>
<div class="r" style="left:319px;top:290px;width:269px;height:256px;background:#fff;box-shadow:inset 1px 1px 0 #808080, inset 2px 2px 0 #404040, inset -1px -1px 0 #fff, inset -2px -2px 0 #d4d0c8;"></div>
<div class="r" style="left:321px;top:292px;width:106px;height:12px;background:#d4d0c8;box-shadow:inset 1px 1px 0 #fff, inset -1px -1px 0 #404040, inset -2px -2px 0 #808080;"></div>
<div class="r" style="left:427px;top:292px;width:159px;height:12px;background:#d4d0c8;box-shadow:inset 1px 1px 0 #fff, inset -1px -1px 0 #404040, inset -2px -2px 0 #808080;"></div>
<div class="t" style="left:323px;top:293px;font-size:10px;line-height:10px;color:#000;transform:translate(0.816px,0.530px) scaleX(0.8550);">Property</div>
<div class="t" style="left:431px;top:293px;font-size:10px;line-height:10px;color:#000;transform:translate(0.457px,0.530px) scaleX(0.8550);">Value</div>
<div class="r" style="left:321px;top:304px;width:265px;height:240px;overflow:hidden">
<div class="t" style="left:3px;top:3px;font-size:10px;line-height:10px;color:#000;transform:translate(0.772px,0.630px) scaleX(0.8550);">Connection-specific DN...</div>
<div class="t" style="left:3px;top:17px;font-size:10px;line-height:10px;color:#000;transform:translate(0.516px,0.100px) scaleX(0.8550);">Description</div>
<div class="t" style="left:110px;top:17px;font-size:10px;line-height:10px;color:#000;transform:translate(0.957px,0.100px) scaleX(0.8550);">vir0int</div>
<div class="t" style="left:3px;top:30px;font-size:10px;line-height:10px;color:#000;transform:translate(0.516px,0.570px) scaleX(0.8550);">Physical Address</div>
<div class="t" style="left:110px;top:30px;font-size:10px;line-height:10px;color:#000;transform:translate(0.658px,0.570px) scaleX(0.8550);">00-15-5D-01-66-00</div>
<div class="t" style="left:3px;top:44px;font-size:10px;line-height:10px;color:#000;transform:translate(0.516px,0.040px) scaleX(0.8550);">DHCP Enabled</div>
<div class="t" style="left:110px;top:44px;font-size:10px;line-height:10px;color:#000;transform:translate(0.316px,0.040px) scaleX(0.8550);">No</div>
<div class="t" style="left:3px;top:57px;font-size:10px;line-height:10px;color:#000;transform:translate(0.431px,0.510px) scaleX(0.8550);">IPv4 Address</div>
<div class="t" style="left:110px;top:57px;font-size:10px;line-height:10px;color:#000;transform:translate(0.359px,0.510px) scaleX(0.8550);">192.168.3.10</div>
<div class="t" style="left:3px;top:70px;font-size:10px;line-height:10px;color:#000;transform:translate(0.431px,0.980px) scaleX(0.8550);">IPv4 Subnet Mask</div>
<div class="t" style="left:110px;top:70px;font-size:10px;line-height:10px;color:#000;transform:translate(0.573px,0.980px) scaleX(0.8550);">255.255.255.0</div>
<div class="t" style="left:3px;top:84px;font-size:10px;line-height:10px;color:#000;transform:translate(0.431px,0.450px) scaleX(0.8550);">IPv4 Default Gateway</div>
<div class="t" style="left:3px;top:97px;font-size:10px;line-height:10px;color:#000;transform:translate(0.431px,0.920px) scaleX(0.8550);">IPv4 DNS Servers</div>
<div class="t" style="left:110px;top:97px;font-size:10px;line-height:10px;color:#000;transform:translate(0.658px,0.920px) scaleX(0.8550);">8.8.8.8</div>
<div class="t" style="left:110px;top:111px;font-size:10px;line-height:10px;color:#000;transform:translate(0.658px,0.390px) scaleX(0.8550);">8.8.4.4</div>
<div class="t" style="left:3px;top:124px;font-size:10px;line-height:10px;color:#000;transform:translate(0.431px,0.860px) scaleX(0.8550);">IPv4 WINS Server</div>
<div class="t" style="left:3px;top:138px;font-size:10px;line-height:10px;color:#000;transform:translate(0.516px,0.330px) scaleX(0.8550);">NetBIOS over Tcpip En...</div>
<div class="t" style="left:110px;top:138px;font-size:10px;line-height:10px;color:#000;transform:translate(0.829px,0.330px) scaleX(0.8550);">Yes</div>
<div class="t" style="left:3px;top:151px;font-size:10px;line-height:10px;color:#000;transform:translate(0.516px,0.800px) scaleX(0.8550);">Link-local IPv6 Address</div>
<div class="t" style="left:110px;top:151px;font-size:10px;line-height:10px;color:#000;transform:translate(0.872px,0.800px) scaleX(0.8550);">fe80::354e:60dd:e9bc:79a6%18</div>
<div class="t" style="left:3px;top:165px;font-size:10px;line-height:10px;color:#000;transform:translate(0.431px,0.270px) scaleX(0.8550);">IPv6 Default Gateway</div>
<div class="t" style="left:3px;top:178px;font-size:10px;line-height:10px;color:#000;transform:translate(0.431px,0.740px) scaleX(0.8550);">IPv6 DNS Server</div>
</div>
<div class="r" style="left:319px;top:554px;width:268px;height:1px;background:#808080;"></div>
<div class="r" style="left:319px;top:555px;width:268px;height:1px;background:#fff;"></div>
<div class="r" style="left:530px;top:562px;width:60px;height:18px;background:#d4d0c8;box-shadow:inset 1px 1px 0 #fff, inset -1px -1px 0 #404040, inset -2px -2px 0 #808080;"></div>
<div class="t" style="left:549px;top:566px;font-size:10px;line-height:10px;color:#000;transform:translate(0.572px,0.030px) scaleX(0.8550);">Close</div>
<div class="r" style="left:599px;top:199px;width:293px;height:353px;background:#d4d0c8;box-shadow:inset 1px 1px 0 #fff, inset -1px -1px 0 #404040, inset -2px -2px 0 #808080;"></div>
<div class="r" style="left:602px;top:201px;width:288px;height:14px;background:linear-gradient(90deg,#808080,#c0c0c0);"></div>
<svg class="r" style="left:606px;top:202px" width="8" height="14"><defs><linearGradient id="cg6" x1="0" y1="0" x2="1" y2="0"><stop offset="0" stop-color="#9fb0c4"/><stop offset="0.5" stop-color="#eef3f8"/><stop offset="1" stop-color="#8e9fb4"/></linearGradient></defs><rect x="0.7000000000000002" y="0.2" width="6.6" height="9.2" rx="1.6" fill="url(#cg6)" stroke="#a9b6c6" stroke-width="0.5"/><rect x="3.4" y="2.2" width="1.2" height="5" fill="#7f90a6"/><rect x="1.9" y="9.399999999999999" width="4.2" height="4" fill="#2ea6e2"/></svg>
<div class="t" style="left:616px;top:203px;font-size:9.45px;line-height:9.45px;color:#d4d0c8;font-weight:bold;transform:translate(0.865px,0.696px) scaleX(1.0335);">pavel Status</div>
<div class="r" style="left:875px;top:203px;width:13px;height:11px;background:#d4d0c8;box-shadow:inset 1px 1px 0 #fff, inset -1px -1px 0 #404040, inset -2px -2px 0 #808080;"></div>
<svg class="r" style="left:875px;top:203px" width="13" height="11"><path d="M3.0 2.5 L9.0 8.5 M9.0 2.5 L3.0 8.5" stroke="#000" stroke-width="1.6"/></svg>
<div class="r" style="left:602px;top:217px;width:292px;height:343px;background:#d4d0c8;box-shadow:inset 1px 1px 0 #fff, inset -1px -1px 0 #404040, inset -2px -2px 0 #808080;"></div>
<div class="r" style="left:604px;top:219px;width:288px;height:14px;background:linear-gradient(90deg,#808080,#c0c0c0);"></div>
<div class="t" style="left:605px;top:220px;font-size:9.45px;line-height:9.45px;color:#d4d0c8;font-weight:bold;transform:translate(0.192px,0.696px) scaleX(0.9895);">Network Connection Details</div>
<div class="r" style="left:877px;top:220px;width:13px;height:11px;background:#d4d0c8;box-shadow:inset 1px 1px 0 #fff, inset -1px -1px 0 #404040, inset -2px -2px 0 #808080;"></div>
<svg class="r" style="left:877px;top:220px" width="13" height="11"><path d="M3.0 2.5 L9.0 8.5 M9.0 2.5 L3.0 8.5" stroke="#000" stroke-width="1.6"/></svg>
<div class="t" style="left:612px;top:242px;font-size:10px;line-height:10px;color:#000;transform:translate(0.514px,0.530px) scaleX(0.8578);">Network Connection Details:</div>
<div class="r" style="left:613px;top:257px;width:269px;height:254px;background:#fff;box-shadow:inset 1px 1px 0 #808080, inset 2px 2px 0 #404040, inset -1px -1px 0 #fff, inset -2px -2px 0 #d4d0c8;"></div>
<div class="r" style="left:615px;top:259px;width:106px;height:12px;background:#d4d0c8;box-shadow:inset 1px 1px 0 #fff, inset -1px -1px 0 #404040, inset -2px -2px 0 #808080;"></div>
<div class="r" style="left:721px;top:259px;width:159px;height:12px;background:#d4d0c8;box-shadow:inset 1px 1px 0 #fff, inset -1px -1px 0 #404040, inset -2px -2px 0 #808080;"></div>
<div class="t" style="left:617px;top:259px;font-size:10px;line-height:10px;color:#000;transform:translate(0.816px,0.730px) scaleX(0.8550);">Property</div>
<div class="t" style="left:725px;top:259px;font-size:10px;line-height:10px;color:#000;transform:translate(0.457px,0.730px) scaleX(0.8550);">Value</div>
<div class="r" style="left:615px;top:271px;width:265px;height:238px;overflow:hidden">
<div class="t" style="left:3px;top:2px;font-size:10px;line-height:10px;color:#000;transform:translate(0.772px,0.930px) scaleX(0.8550);">Connection-specific DN...</div>
<div class="t" style="left:3px;top:16px;font-size:10px;line-height:10px;color:#000;transform:translate(0.516px,0.400px) scaleX(0.8550);">Description</div>
<div class="t" style="left:110px;top:16px;font-size:10px;line-height:10px;color:#000;transform:translate(0.316px,0.400px) scaleX(0.8550);">D-Link DGE-528T Gigabit Ethernet Adapter</div>
<div class="t" style="left:3px;top:29px;font-size:10px;line-height:10px;color:#000;transform:translate(0.516px,0.870px) scaleX(0.8550);">Physical Address</div>
<div class="t" style="left:110px;top:29px;font-size:10px;line-height:10px;color:#000;transform:translate(0.658px,0.870px) scaleX(0.8550);">84-C9-B2-43-0C-84</div>
<div class="t" style="left:3px;top:43px;font-size:10px;line-height:10px;color:#000;transform:translate(0.516px,0.340px) scaleX(0.8550);">DHCP Enabled</div>
<div class="t" style="left:110px;top:43px;font-size:10px;line-height:10px;color:#000;transform:translate(0.829px,0.340px) scaleX(0.8550);">Yes</div>
<div class="t" style="left:3px;top:56px;font-size:10px;line-height:10px;color:#000;transform:translate(0.431px,0.810px) scaleX(0.8550);">IPv4 Address</div>
<div class="t" style="left:110px;top:56px;font-size:10px;line-height:10px;color:#000;transform:translate(0.359px,0.810px) scaleX(0.8550);">192.168.1.103</div>
<div class="t" style="left:3px;top:70px;font-size:10px;line-height:10px;color:#000;transform:translate(0.431px,0.280px) scaleX(0.8550);">IPv4 Subnet Mask</div>
<div class="t" style="left:110px;top:70px;font-size:10px;line-height:10px;color:#000;transform:translate(0.573px,0.280px) scaleX(0.8550);">255.255.255.0</div>
<div class="t" style="left:3px;top:83px;font-size:10px;line-height:10px;color:#000;transform:translate(0.516px,0.750px) scaleX(0.8550);">Lease Obtained</div>
<div class="t" style="left:110px;top:83px;font-size:10px;line-height:10px;color:#000;transform:translate(0.658px,0.750px) scaleX(0.8550);">den 13 mars 2012 10:05:53</div>
<div class="t" style="left:3px;top:97px;font-size:10px;line-height:10px;color:#000;transform:translate(0.516px,0.220px) scaleX(0.8550);">Lease Expires</div>
<div class="t" style="left:110px;top:97px;font-size:10px;line-height:10px;color:#000;transform:translate(0.658px,0.220px) scaleX(0.8550);">den 13 mars 2012 15:05:53</div>
<div class="t" style="left:3px;top:110px;font-size:10px;line-height:10px;color:#000;transform:translate(0.431px,0.690px) scaleX(0.8550);">IPv4 Default Gateway</div>
<div class="t" style="left:110px;top:110px;font-size:10px;line-height:10px;color:#000;transform:translate(0.359px,0.690px) scaleX(0.8550);">192.168.1.1</div>
<div class="t" style="left:3px;top:124px;font-size:10px;line-height:10px;color:#000;transform:translate(0.431px,0.160px) scaleX(0.8550);">IPv4 DHCP Server</div>
<div class="t" style="left:110px;top:124px;font-size:10px;line-height:10px;color:#000;transform:translate(0.359px,0.160px) scaleX(0.8550);">192.168.1.1</div>
<div class="t" style="left:3px;top:137px;font-size:10px;line-height:10px;color:#000;transform:translate(0.431px,0.630px) scaleX(0.8550);">IPv4 DNS Server</div>
<div class="t" style="left:110px;top:137px;font-size:10px;line-height:10px;color:#000;transform:translate(0.573px,0.630px) scaleX(0.8550);">208.67.222.222</div>
<div class="t" style="left:3px;top:151px;font-size:10px;line-height:10px;color:#000;transform:translate(0.431px,0.100px) scaleX(0.8550);">IPv4 WINS Server</div>
<div class="t" style="left:3px;top:164px;font-size:10px;line-height:10px;color:#000;transform:translate(0.516px,0.570px) scaleX(0.8550);">NetBIOS over Tcpip En...</div>
<div class="t" style="left:110px;top:164px;font-size:10px;line-height:10px;color:#000;transform:translate(0.829px,0.570px) scaleX(0.8550);">Yes</div>
<div class="t" style="left:3px;top:178px;font-size:10px;line-height:10px;color:#000;transform:translate(0.516px,0.040px) scaleX(0.8550);">Link-local IPv6 Address</div>
<div class="t" style="left:110px;top:178px;font-size:10px;line-height:10px;color:#000;transform:translate(0.872px,0.040px) scaleX(0.8550);">fe80::7de3:50c5:903f:a0ba%13</div>
<div class="t" style="left:3px;top:191px;font-size:10px;line-height:10px;color:#000;transform:translate(0.431px,0.510px) scaleX(0.8550);">IPv6 Default Gateway</div>
<div class="t" style="left:3px;top:204px;font-size:10px;line-height:10px;color:#000;transform:translate(0.431px,0.980px) scaleX(0.8550);">IPv6 DNS Server</div>
</div>
<div class="r" style="left:615px;top:499px;width:265px;height:12px;background:repeating-conic-gradient(#fff 0 25%, #d4d0c8 0 50%) 0 0/2px 2px;"></div>
<div class="r" style="left:615px;top:499px;width:13px;height:12px;background:#d4d0c8;box-shadow:inset 1px 1px 0 #fff, inset -1px -1px 0 #404040, inset -2px -2px 0 #808080;"></div>
<svg class="r" style="left:615px;top:499px" width="13" height="12"><path d="M4 6.0 L7 3.0 L7 9.0z" fill="#000"/></svg>
<div class="r" style="left:628px;top:499px;width:231px;height:12px;background:#d4d0c8;box-shadow:inset 1px 1px 0 #fff, inset -1px -1px 0 #404040, inset -2px -2px 0 #808080;"></div>
<div class="r" style="left:867px;top:499px;width:13px;height:12px;background:#d4d0c8;box-shadow:inset 1px 1px 0 #fff, inset -1px -1px 0 #404040, inset -2px -2px 0 #808080;"></div>
<svg class="r" style="left:867px;top:499px" width="13" height="12"><path d="M8 6.0 L5 3.0 L5 9.0z" fill="#000"/></svg>
<div class="r" style="left:613px;top:520px;width:268px;height:1px;background:#808080;"></div>
<div class="r" style="left:613px;top:521px;width:268px;height:1px;background:#fff;"></div>
<div class="r" style="left:824px;top:528px;width:60px;height:18px;background:#d4d0c8;box-shadow:inset 1px 1px 0 #fff, inset -1px -1px 0 #404040, inset -2px -2px 0 #808080;"></div>
<div class="t" style="left:843px;top:532px;font-size:10px;line-height:10px;color:#000;transform:translate(0.572px,0.030px) scaleX(0.8550);">Close</div>
</body></html>
